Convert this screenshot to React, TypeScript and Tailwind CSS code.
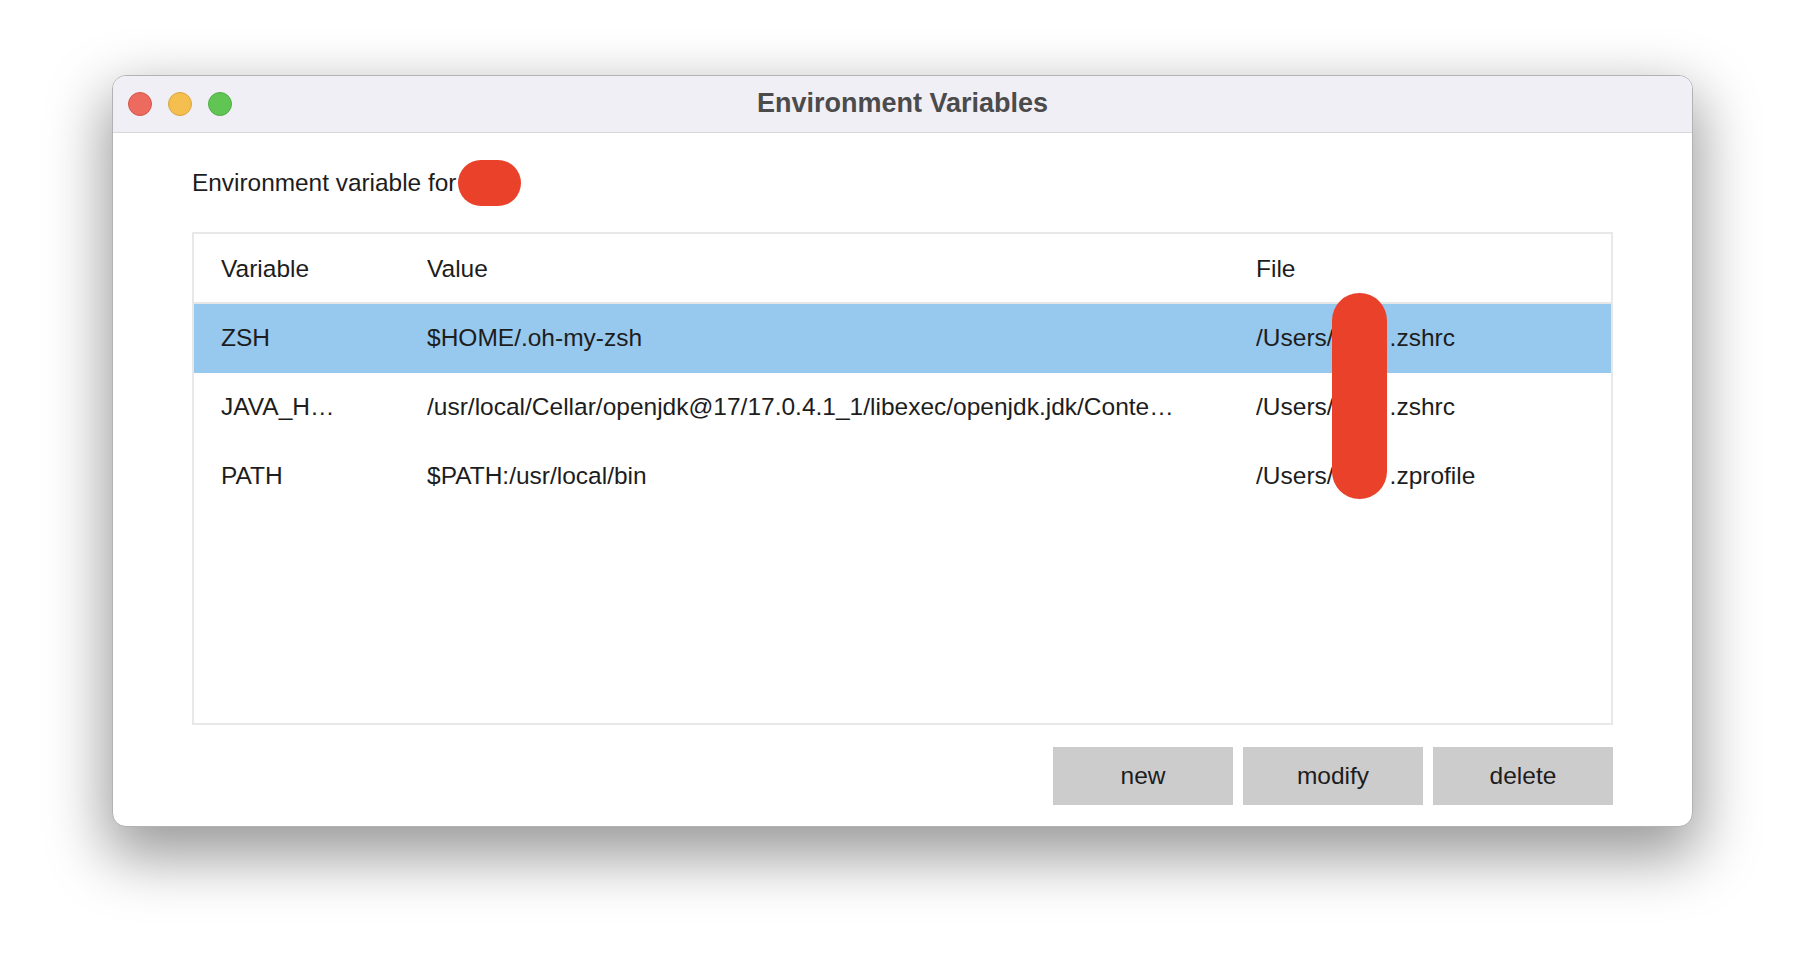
import React from "react";

const rows = [
  { v: "ZSH", val: "$HOME/.oh-my-zsh", file: ".zshrc", sel: true },
  {
    v: "JAVA_H…",
    val: "/usr/local/Cellar/openjdk@17/17.0.4.1_1/libexec/openjdk.jdk/Conte…",
    file: ".zshrc",
    sel: false,
  },
  { v: "PATH", val: "$PATH:/usr/local/bin", file: ".zprofile", sel: false },
];

export default function App() {
  return (
    <div className="w-[1804px] h-[974px] bg-white pt-[75px] pl-[112px] font-['Liberation_Sans',Arial,sans-serif] text-[#1d1d1d]">
      <div className="w-[1581px] h-[752px] rounded-[14px] bg-white border border-[#b2b2b2] shadow-[0_24px_60px_6px_rgba(0,0,0,0.4)] overflow-hidden flex flex-col">
        <div className="h-[57px] shrink-0 bg-[#f1eff6] border-b border-[#d8d8d8] grid grid-cols-[1fr_auto_1fr] items-center">
          <div className="flex items-center gap-[16px] pl-[15px]">
            <span className="w-[24px] h-[24px] rounded-full bg-[#ec6a5e] border border-[#d4574c]" />
            <span className="w-[24px] h-[24px] rounded-full bg-[#f5bf4f] border border-[#d9a53e]" />
            <span className="w-[24px] h-[24px] rounded-full bg-[#61c554] border border-[#4fad45]" />
          </div>
          <div className="text-[27px] font-bold text-[#4b4b4b] leading-none pb-[2px]">Environment Variables</div>
          <div />
        </div>
        <div className="flex-1 flex flex-col px-[79px] pt-[27px]">
          <div className="h-[46px] flex items-center text-[24.4px]">
            <span>Environment variable for</span>
            <span className="ml-[2px] w-[63px] h-[46px] rounded-full bg-[#e9412a]" />
          </div>
          <div className="mt-[26px] h-[493px] border-2 border-[#e8e8e8] relative text-[24.5px]">
            <div className="h-[70px] border-b-2 border-[#e6e6e6] grid grid-cols-[206px_829px_1fr] items-center pl-[27px] pt-[2px]">
              <span>Variable</span>
              <span>Value</span>
              <span>File</span>
            </div>
            {rows.map((r, i) => (
              <div
                key={i}
                className={
                  r.sel
                    ? "h-[69px] grid grid-cols-[206px_829px_1fr] items-center pl-[27px] bg-[#97c8ee]"
                    : "h-[69px] grid grid-cols-[206px_829px_1fr] items-center pl-[27px]"
                }
              >
                <span className="whitespace-nowrap overflow-hidden">{r.v}</span>
                <span className="whitespace-nowrap overflow-hidden">{r.val}</span>
                <span className="whitespace-nowrap overflow-hidden">
                  /Users/<span className="inline-block w-[56px]" />
                  {r.file}
                </span>
              </div>
            ))}
            <div className="absolute left-[1138px] top-[59px] w-[55px] h-[206px] rounded-full bg-[#e9412a]" />
          </div>
          <div className="mt-[22px] flex justify-end gap-[10px] text-[24.5px]">
            <button className="w-[180px] h-[58px] bg-[#cccccc] text-[#1d1d1d]">new</button>
            <button className="w-[180px] h-[58px] bg-[#cccccc] text-[#1d1d1d]">modify</button>
            <button className="w-[180px] h-[58px] bg-[#cccccc] text-[#1d1d1d]">delete</button>
          </div>
        </div>
      </div>
    </div>
  );
}
